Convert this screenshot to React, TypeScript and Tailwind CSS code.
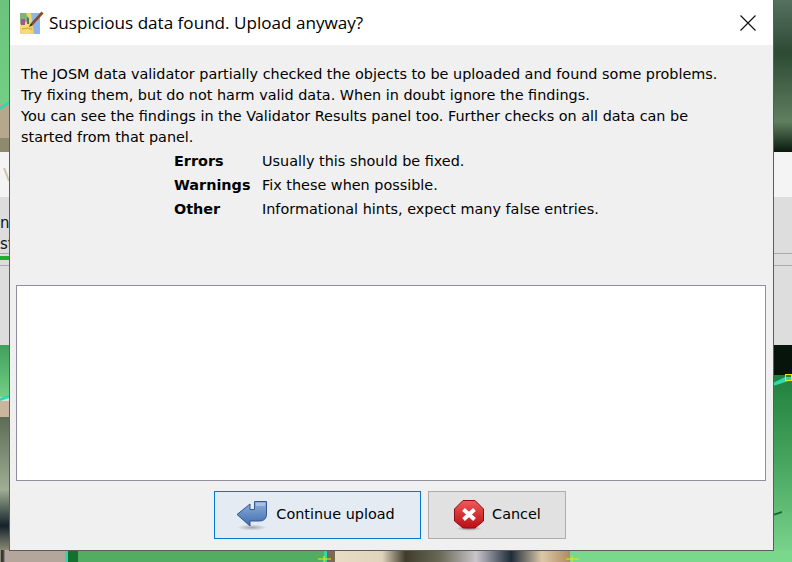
const bodyFont = "font-['DejaVu_Sans','Liberation_Sans',sans-serif]";

const MapBackdrop = () => (
  <svg className="absolute inset-0" width="792" height="562" viewBox="0 0 792 562">
    <defs>
      <linearGradient id="leftGreen" x1="0" y1="0" x2="0" y2="1">
        <stop offset="0" stopColor="#6bc37c" />
        <stop offset="1" stopColor="#72cf85" />
      </linearGradient>
      <linearGradient id="darkPhoto" x1="0" y1="0" x2="0" y2="1">
        <stop offset="0" stopColor="#56705f" />
        <stop offset="0.35" stopColor="#2e4a34" />
        <stop offset="0.8" stopColor="#5f7f60" />
        <stop offset="1" stopColor="#0a1a0e" />
      </linearGradient>
      <linearGradient id="rightGreen" x1="0" y1="0" x2="0" y2="1">
        <stop offset="0" stopColor="#1f7f3c" />
        <stop offset="0.5" stopColor="#4aa862" />
        <stop offset="1" stopColor="#7fd890" />
      </linearGradient>
      <linearGradient id="leftGreen2" x1="0" y1="0" x2="0" y2="1">
        <stop offset="0" stopColor="#3f9f5c" />
        <stop offset="1" stopColor="#74cf86" />
      </linearGradient>
      <linearGradient id="greyPhoto" x1="0" y1="0" x2="0" y2="1">
        <stop offset="0" stopColor="#5b6b56" />
        <stop offset="0.5" stopColor="#9fae94" />
        <stop offset="0.75" stopColor="#14222a" />
        <stop offset="1" stopColor="#c7bc9c" />
      </linearGradient>
      <linearGradient id="bottomStrip" x1="0" y1="0" x2="1" y2="0">
        <stop offset="0" stopColor="#c7bc9c" />
        <stop offset="0.02" stopColor="#2f3438" />
        <stop offset="0.05" stopColor="#3a3f44" />
        <stop offset="0.08" stopColor="#b5a69c" />
      </linearGradient>
      <linearGradient id="photoStrip" x1="0" y1="0" x2="1" y2="0">
        <stop offset="0" stopColor="#e8dcc4" />
        <stop offset="0.2" stopColor="#e0d4bc" />
        <stop offset="0.3" stopColor="#3f3c2c" />
        <stop offset="0.45" stopColor="#6c6a58" />
        <stop offset="0.6" stopColor="#c9c5cc" />
        <stop offset="0.75" stopColor="#1e2c3a" />
        <stop offset="0.88" stopColor="#dcc8a8" />
        <stop offset="1" stopColor="#b08c60" />
      </linearGradient>
    </defs>

    {/* left strip */}
    <rect x="0" y="0" width="9" height="104" fill="url(#leftGreen)" />
    <rect x="0" y="104" width="9" height="48" fill="#b5a88c" />
    <rect x="0" y="138" width="9" height="14" fill="#8f8970" />
    <polygon points="0,107 9,101 9,104 0,110" fill="#2fd9b0" />
    <rect x="0" y="345" width="9" height="52" fill="url(#leftGreen2)" />
    <polygon points="0,398 9,395 9,398 0,401" fill="#2fd9b0" />
    <rect x="0" y="401" width="9" height="16" fill="#c9b69c" />
    <rect x="0" y="417" width="9" height="145" fill="url(#greyPhoto)" />

    {/* right strip */}
    <rect x="773" y="0" width="19" height="152" fill="url(#darkPhoto)" />
    <rect x="773" y="345" width="19" height="30" fill="#06140c" />
    <rect x="773" y="375" width="19" height="187" fill="url(#rightGreen)" />
    <polygon points="773,383 785,377 792,377 792,380 773,386" fill="#2fd9b0" />
    <rect x="785.5" y="374.5" width="6" height="6" fill="none" stroke="#f2e600" />
    <polygon points="773,514 782,511 782,513 773,516" fill="#176b33" />

    {/* bottom strip */}
    <rect x="0" y="550" width="65" height="12" fill="url(#bottomStrip)" />
    <rect x="35" y="550" width="30" height="12" fill="#b5a69c" />
    <rect x="65" y="550" width="260" height="12" fill="#52ad62" />
    <rect x="65" y="550" width="3" height="12" fill="#2fd9b0" />
    <rect x="68" y="550" width="10" height="12" fill="#15702f" />
    <rect x="324" y="550" width="3" height="12" fill="#2fd9b0" />
    <rect x="327" y="550" width="8" height="12" fill="#7c6a58" />
    <rect x="335" y="550" width="235" height="12" fill="url(#photoStrip)" />
    <rect x="570" y="550" width="222" height="12" fill="#7ad88d" />
    <g stroke="#f2e600" strokeWidth="1">
      <path d="M324 556v6M318 559h13" />
      <path d="M572 556v6M566 559h13" />
    </g>
  </svg>
);

// panel of the main window that shows on either side of the dialog
const SidePanel = ({ side }: { side: "left" | "right" }) => (
  <div className={`absolute top-[152px] flex h-[193px] flex-col bg-[#dddddd] ${side === "left" ? "left-0 w-[9px]" : "right-0 w-[19px]"}`}>
    <div className="h-[45px] bg-[#f4f4f4]" />
    <div className="h-[56px]" />
    <div className="h-[1px] bg-[#aaaaaa]" />
    <div className="h-[11px]" />
    <div className="h-[1px] bg-[#aaaaaa]" />
  </div>
);

const JosmLogo = () => (
  <svg width="24" height="25" viewBox="0 0 24 25">
    <rect x="0" y="3" width="20" height="21" rx="1" fill="#f1d36a" />
    <path d="M11 3h9v21h-6z" fill="#8fb4e8" />
    <path d="M0 3h6l3 8-9 3z" fill="#7fb27f" />
    <path d="M0 15l8-2 3 11H2z" fill="#f4dc7c" />
    <path d="M1 9h4v6H1z" fill="#a8548c" />
    <path d="M7 7l2 1v6H7z" fill="#3f7f5f" />
    <path d="M2 19c4-1 7-1 10 0" fill="none" stroke="#d9b23c" strokeWidth="1.5" />
    <path d="M11 13L21.500 1.500 23.500 3.500 13 15z" fill="#8a4a28" />
    <path d="M9 17l2-4 2 2z" fill="#3a2414" />
  </svg>
);

const ContinueIcon = () => (
  <svg width="32" height="32" viewBox="0 0 32 32">
    <defs>
      <linearGradient id="arrowFill" x1="0" y1="0" x2="0" y2="1">
        <stop offset="0" stopColor="#8fb0da" />
        <stop offset="1" stopColor="#3f6cae" />
      </linearGradient>
      <radialGradient id="arrowShadow">
        <stop offset="0" stopColor="#8a8a8a" stopOpacity="0.7" />
        <stop offset="1" stopColor="#8a8a8a" stopOpacity="0" />
      </radialGradient>
    </defs>
    <ellipse cx="16" cy="28.5" rx="15" ry="3" fill="url(#arrowShadow)" />
    <path
      d="M1 15.500L14 5v5.500h4.500V2.500H30.500V15c0 4.500-2.500 7-7 7H14v5z"
      fill="url(#arrowFill)"
      stroke="#34588f"
      strokeWidth="1"
      strokeLinejoin="round"
    />
    <path d="M20 4h9v3h-9z" fill="#b7cce8" opacity="0.7" />
  </svg>
);

const CancelIcon = () => (
  <svg width="32" height="32" viewBox="0 0 32 32">
    <defs>
      <linearGradient id="stopFill" x1="0" y1="0" x2="0" y2="1">
        <stop offset="0" stopColor="#f0595a" />
        <stop offset="1" stopColor="#b80f14" />
      </linearGradient>
      <radialGradient id="stopShadow">
        <stop offset="0" stopColor="#7a6a6a" stopOpacity="0.7" />
        <stop offset="1" stopColor="#7a6a6a" stopOpacity="0" />
      </radialGradient>
    </defs>
    <ellipse cx="16" cy="29.500" rx="13" ry="2.500" fill="url(#stopShadow)" />
    <path d="M10 1.500h12L30.500 10v12L22 29H10L1.500 22V10z" fill="url(#stopFill)" stroke="#8e0b10" strokeWidth="1" />
    <path d="M10.500 10.500l11 10M21.500 10.500l-11 10" stroke="#fff" strokeWidth="4" />
  </svg>
);

const rows = [
  { label: "Errors", text: "Usually this should be fixed." },
  { label: "Warnings", text: "Fix these when possible." },
  { label: "Other", text: "Informational hints, expect many false entries." },
];

export default function App() {
  return (
    <div className={`relative h-[562px] w-[792px] overflow-hidden bg-[#dddddd] ${bodyFont}`}>
      <MapBackdrop />
      <SidePanel side="left" />
      <SidePanel side="right" />

      {/* text of the main window, showing at the dialog's left edge */}
      <div className="absolute left-0 top-[213px] text-[15px] leading-[21px] text-[#111111]">
        <div>n</div>
        <div>st</div>
      </div>
      <div className="absolute left-0 top-[256px] h-[4px] w-[9px] bg-[#22aa33]" />
      <div className="absolute left-[3px] top-[166px] text-[18px] leading-[18px] text-[#c9c2b0]">V</div>

      <div className="absolute left-[9px] top-0 flex h-[551px] w-[765px] flex-col border-r border-b border-l border-[#5c5c5c] bg-[#f0f0f0] text-black">
        <div className="flex h-[45px] items-center bg-white pl-[10px] pr-[17px]">
          <JosmLogo />
          <div className="ml-[5px] flex-1 text-[17.100px] font-['Open_Sans',sans-serif] leading-[22px]">
            Suspicious data found. Upload anyway?
          </div>
          <svg width="16" height="16" viewBox="0 0 16 16">
            <path d="M.5.5l15 15M15.500.5l-15 15" stroke="#111" strokeWidth="1.200" fill="none" />
          </svg>
        </div>

        <div className="whitespace-nowrap pl-[11px] pt-[19px] text-[14.400px] leading-[21px]">
          <div>The JOSM data validator partially checked the objects to be uploaded and found some problems.</div>
          <div>Try fixing them, but do not harm valid data. When in doubt ignore the findings.</div>
          <div>You can see the findings in the Validator Results panel too. Further checks on all data can be</div>
          <div>started from that panel.</div>
        </div>

        <div className="ml-[164px] mt-[1px] grid grid-cols-[88px_1fr] text-[14.400px] leading-[24px]">
          {rows.map((row) => (
            <div key={row.label} className="contents">
              <div className="font-bold">{row.label}</div>
              <div>{row.text}</div>
            </div>
          ))}
        </div>

        <div className="ml-[6px] mt-[64px] h-[196px] w-[750px] border border-[#8e8f9f] bg-white" />

        <div className="mt-[10px] flex justify-center gap-[7px] pr-[3px] text-[14.400px]">
          <button className="flex h-[48px] w-[207px] items-center justify-center gap-[8px] border border-[#0078d7] bg-[#e4ebf3] pr-[4px]">
            <ContinueIcon />
            Continue upload
          </button>
          <button className="flex h-[48px] w-[138px] items-center justify-center gap-[7px] border border-[#adadad] bg-[#e1e1e1]">
            <CancelIcon />
            Cancel
          </button>
        </div>
      </div>
    </div>
  );
}
